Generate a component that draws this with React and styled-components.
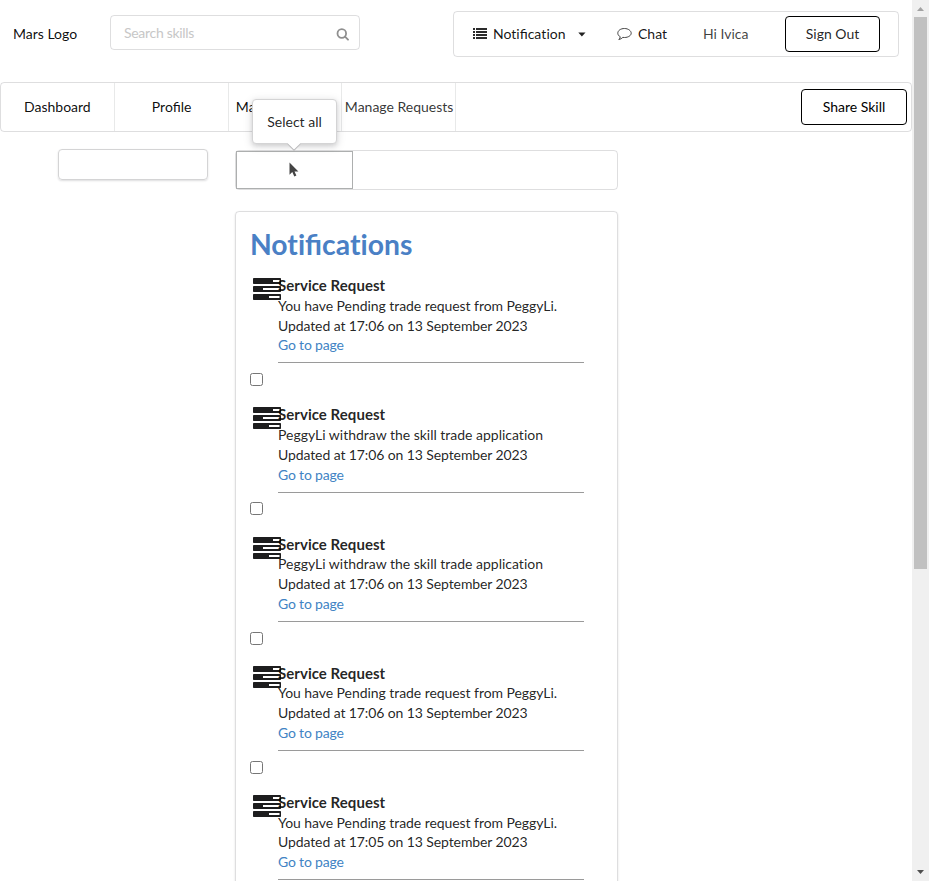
import React from "react";
import styled, { createGlobalStyle } from "styled-components";

const GlobalStyle = createGlobalStyle`
  *, *::before, *::after { box-sizing: border-box; }
  body {
    margin: 0;
    background: #fff;
    color: rgba(0, 0, 0, 0.87);
    font-family: Lato, "Liberation Sans", sans-serif;
    font-size: 14px;
    line-height: 20px;
    overflow: hidden;
  }
`;

const Window = styled.div`
  display: flex;
  height: 881px;
  width: 929px;
  overflow: hidden;
`;

const Page = styled.main`
  width: 912px;
  height: 881px;
  overflow: hidden;
`;

const Header = styled.header`
  display: flex;
  align-items: flex-start;
  height: 82px;
  padding-top: 11px;
`;

const Logo = styled.a`
  width: 97px;
  margin: 13px 0 0 13px;
  color: rgba(0, 0, 0, 0.95);
`;

const SearchBox = styled.div`
  display: flex;
  align-items: center;
  justify-content: space-between;
  width: 250px;
  height: 35px;
  margin-top: 4px;
  padding: 0 10px 0 13px;
  border: 1px solid rgba(34, 36, 38, 0.15);
  border-radius: 4px;
`;

const SearchInput = styled.input`
  width: 180px;
  padding: 0;
  border: 0;
  outline: 0;
  background: none;
  font: inherit;
  letter-spacing: -0.3px;
  &::placeholder { color: #c7c7c7; opacity: 1; }
`;

const SearchIcon = styled.svg`
  width: 13px;
  height: 13px;
  margin-top: 4px;
`;

const AccountMenu = styled.div`
  display: flex;
  align-items: center;
  width: 446px;
  height: 46px;
  margin-left: 93px;
  border: 1px solid rgba(34, 36, 38, 0.15);
  border-radius: 4px;
`;

const MenuItem = styled.div`
  display: flex;
  align-items: center;
  gap: 6px;
  width: ${(p) => p.$width}px;
  padding-left: ${(p) => p.$inset || 0}px;
  color: ${(p) => p.$color || "rgba(0,0,0,0.92)"};
  svg { flex: none; }
`;

const Caret = styled.svg`
  width: 8px;
  height: 5px;
  margin-left: 6px;
`;

/* Sets letters without ligatures */
const Loose = styled.span`
  font-variant-ligatures: none;
`;

const OutlineButton = styled.button`
  width: ${(p) => p.$width}px;
  height: 36px;
  padding: 0;
  border: 1px solid #000;
  border-radius: 4px;
  background: #fff;
  color: ${(p) => p.$color || "#000"};
  font: inherit;
`;

const Nav = styled.nav`
  display: flex;
  align-items: center;
  height: 50px;
  padding-right: 4px;
  border: 1px solid rgba(34, 36, 38, 0.15);
  border-radius: 4px;
`;

const Tab = styled.a`
  display: flex;
  align-items: center;
  justify-content: center;
  width: 113.75px;
  height: 48px;
  padding-left: ${(p) => p.$nudge || 0}px;
  border-right: 1px solid rgba(34, 36, 38, 0.1);
  color: ${(p) => p.$color || "rgba(0,0,0,0.95)"};
  white-space: nowrap;
`;

const Spacer = styled.div`
  flex: 1;
`;

const Content = styled.div`
  display: flex;
  align-items: flex-start;
  padding: 18px 0 0 58px;
`;

const FilterPanel = styled.aside`
  width: 150px;
  height: 31px;
  margin: -1px 27px 0 0;
  border: 1px solid #d4d4d5;
  border-radius: 4px;
  box-shadow: 0 1px 2px rgba(34, 36, 38, 0.15);
`;

const Column = styled.section`
  width: 383px;
`;

const Toolbar = styled.div`
  display: flex;
  height: 40px;
  border: 1px solid rgba(34, 36, 38, 0.15);
  border-radius: 4px;
`;

const SelectAll = styled.button`
  position: relative;
  width: 117px;
  height: 38px;
  padding: 0;
  border: 1px solid #adafaf;
  background: #fff;
`;

const Pointer = styled.svg`
  position: absolute;
  left: 52px;
  top: 10px;
  width: 10px;
  height: 15px;
`;

const Tooltip = styled.span`
  position: absolute;
  left: 15px;
  top: -53px;
  width: 85px;
  height: 45px;
  border: 1px solid #d4d4d5;
  border-radius: 4px;
  background: #fff;
  box-shadow: 0 2px 4px rgba(34, 36, 38, 0.12), 0 2px 10px rgba(34, 36, 38, 0.15);
  color: rgba(0, 0, 0, 0.87);
  font: 14px/44px Lato, "Liberation Sans", sans-serif;
  text-align: center;
  z-index: 1;
  &::after {
    content: "";
    position: absolute;
    left: 36px;
    top: 38.5px;
    width: 10px;
    height: 10px;
    background: #fff;
    border: solid #bababc;
    border-width: 0 1px 1px 0;
    transform: rotate(45deg);
  }
`;

const Card = styled.div`
  height: 760px;
  margin-top: 21px;
  padding: 14px 33px 0 14px;
  border: 1px solid rgba(34, 36, 38, 0.15);
  border-radius: 4px;
  box-shadow: 0 1px 2px rgba(34, 36, 38, 0.15);
`;

const Title = styled.h1`
  margin: 0;
  height: 49.2px;
  color: #4a80c5;
  font-size: 28.3px;
  font-weight: 700;
  line-height: 36px;
`;

const Notice = styled.article`
  display: grid;
  grid-template-columns: 28px 1fr;
  height: 129.2px;
  align-content: start;
`;

const NoticeIcon = styled.svg`
  width: 28px;
  height: 24px;
  margin: 2px 0 0 2.5px;
`;

const NoticeBody = styled.div`
  height: 88.3px;
  border-bottom: 1px solid #9a9a9a;
`;

const NoticeTitle = styled.h2`
  height: 20.6px;
  margin: 0;
  font-size: 15px;
  font-weight: 700;
  line-height: 20px;
  letter-spacing: 0.04px;
`;

const NoticeText = styled.p`
  height: 19.8px;
  margin: 0;
  line-height: 19.8px;
  letter-spacing: ${(p) => p.$tracking || "-0.06px"};
  white-space: nowrap;
`;

const NoticeLink = styled.a`
  display: block;
  height: 19.8px;
  color: #4183c4;
  line-height: 19.8px;
  letter-spacing: -0.18px;
`;

const Check = styled.input`
  grid-column: 1;
  width: 13px;
  height: 13px;
  margin: 9.7px 0 0;
`;

const ScrollTrack = styled.div`
  display: flex;
  flex-direction: column;
  align-items: center;
  justify-content: space-between;
  width: 17px;
  height: 881px;
  background: #f0f0f0;
`;

const ScrollTop = styled.div`
  display: flex;
  flex-direction: column;
  align-items: center;
`;

const ScrollArrow = styled.svg`
  display: block;
  width: 17px;
  height: 17px;
`;

const ScrollThumb = styled.div`
  width: 13px;
  height: 552px;
  background: #c1c1c1;
`;

const notices = [
  ["You have Pending trade request from PeggyLi.", "17:06"],
  ["PeggyLi withdraw the skill trade application", "17:06"],
  ["PeggyLi withdraw the skill trade application", "17:06"],
  ["You have Pending trade request from PeggyLi.", "17:06"],
  ["You have Pending trade request from PeggyLi.", "17:05"],
];

function NoticeItem({ text, time }) {
  return (
    <Notice>
      <NoticeIcon viewBox="0 0 28 24">
        {[[1, 20], [9, 10], [17, 16]].map(([y, x]) => (
          <g key={y}>
            <rect x="0" y={y} width="28" height="6" rx="0.7" fill="#1d1d1e" />
            <rect x={x} y={y + 2} width={26.5 - x} height="2" fill="#fff" />
          </g>
        ))}
      </NoticeIcon>
      <NoticeBody>
        <NoticeTitle>Service Request</NoticeTitle>
        <NoticeText $tracking={text.startsWith("P") ? "-0.01px" : undefined}>{text}</NoticeText>
        <NoticeText $tracking="-0.1px">Updated at {time} on 13 September 2023</NoticeText>
        <NoticeLink>Go to page</NoticeLink>
      </NoticeBody>
      <Check type="checkbox" />
    </Notice>
  );
}

export default function App() {
  return (
    <>
      <GlobalStyle />
      <Window>
        <Page>
          <Header>
            <Logo>Mars Logo</Logo>
            <SearchBox>
              <SearchInput placeholder="Search skills" />
              <SearchIcon viewBox="0 0 13 13" fill="none" stroke="#8f8f8f" strokeWidth="1.8">
                <circle cx="5.8" cy="5.5" r="4.3" />
                <path d="M9 8.700L12 11.700" strokeLinecap="round" />
              </SearchIcon>
            </SearchBox>
            <AccountMenu>
              <MenuItem $width={144} $inset={19}>
                <svg width="14" height="12" viewBox="0 0 14 12" fill="#2b2b2b">
                  <path d="M0 0h2v2H0zM3 0h11v2H3zM0 3h2v2H0zM3 3h11v2H3zM0 6h2v2H0zM3 6h11v2H3zM0 9h2v2H0zM3 9h11v2H3z" />
                </svg>
                <span><Loose>Not</Loose>ifica<Loose>t</Loose>ion</span>
                <Caret viewBox="0 0 8 5" fill="#222"><path d="M0.3 0.500h7.200L3.900 4.500z" /></Caret>
              </MenuItem>
              <MenuItem $width={105} $inset={19}>
                <svg width="15" height="14" viewBox="0.500 0 15 14" fill="none" stroke="#444" strokeWidth="1">
                  <path d="M8 1.500C4.200 1.500 1.300 3.500 1.300 6.200c0 1.500 1 2.800 2.500 3.600C3.600 10.800 3 11.700 2.300 12.500c1.800-.3 3-1 4-2.100.6.100 1.100.1 1.700.1 3.800 0 6.700-2 6.700-4.300S11.800 1.500 8 1.500z" />
                </svg>
                <span>Chat</span>
              </MenuItem>
              <MenuItem $width={82} $color="rgba(0,0,0,0.75)">Hi Ivica</MenuItem>
              <OutlineButton $width={95} $color="rgba(0,0,0,0.87)">Sign Out</OutlineButton>
            </AccountMenu>
          </Header>
          <Nav>
            <Tab>Dashboard</Tab>
            <Tab $nudge={1}>Profile</Tab>
            <Tab $nudge={1}>Manage Listings</Tab>
            <Tab $nudge={1} $color="rgba(0,0,0,0.8)">Manage Requests</Tab>
            <Spacer />
            <OutlineButton $width={106}>Share Skill</OutlineButton>
          </Nav>
          <Content>
            <FilterPanel />
            <Column>
              <Toolbar>
                <SelectAll aria-label="Select all">
                  <Tooltip>Select all</Tooltip>
                  <Pointer viewBox="0 0 10 15">
                    <path d="M0.500 0.500V12.700L3.300 10.100L5.300 14.500L7.400 13.600L5.500 9.400H9.400z" fill="#444" />
                  </Pointer>
                </SelectAll>
              </Toolbar>
              <Card>
                <Title><Loose>Not</Loose>ifica<Loose>t</Loose>ions</Title>
                {notices.map(([text, time], i) => (
                  <NoticeItem key={i} text={text} time={time} />
                ))}
              </Card>
            </Column>
          </Content>
        </Page>
        <ScrollTrack>
          <ScrollTop>
            <ScrollArrow viewBox="0 0 17 17"><path d="M5 11L8.500 7L12 11z" fill="#a3a3a3" /></ScrollArrow>
            <ScrollThumb />
          </ScrollTop>
          <ScrollArrow viewBox="0 0 17 17"><path d="M5 6L8.500 10L12 6z" fill="#505050" /></ScrollArrow>
        </ScrollTrack>
      </Window>
    </>
  );
}
